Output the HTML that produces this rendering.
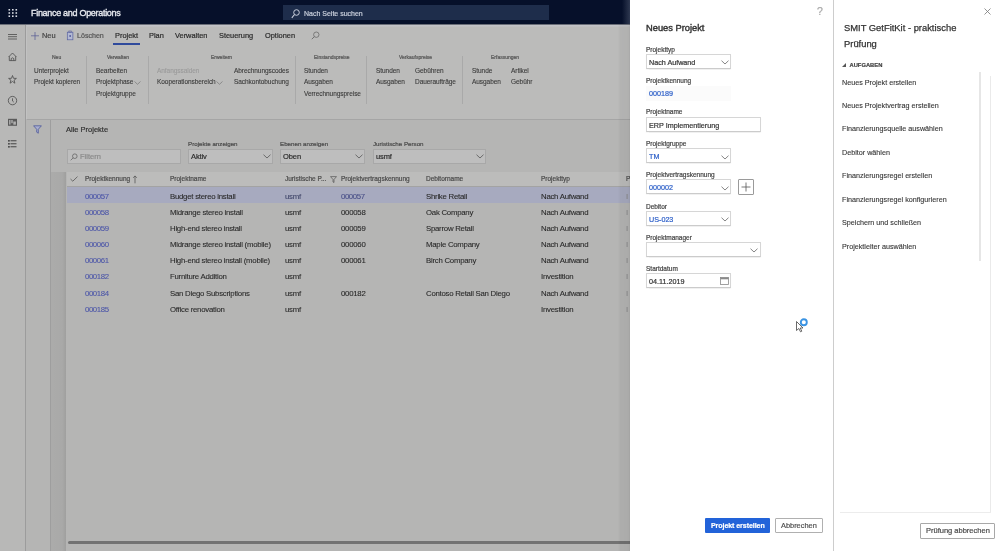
<!DOCTYPE html>
<html><head><meta charset="utf-8">
<style>
*{margin:0;padding:0;box-sizing:border-box}
html,body{width:1000px;height:551px;overflow:hidden;background:#b7b7b6;font-family:"Liberation Sans",sans-serif;color:#2e2e2e}
.a{position:absolute;white-space:nowrap}
#root div{-webkit-text-stroke-width:0.2px}
#root .rb{-webkit-text-stroke-width:0.1px;color:#3a3a3a}
#root .cell{-webkit-text-stroke-width:0.1px}
#root .ti{-webkit-text-stroke-width:0.1px}
#hdr{left:0;top:0;width:630px;height:24px;background:#06102a;border-bottom:0}
#rail{left:0;top:24px;width:26px;height:527px;background:#b8b8b7;border-right:1px solid #9c9c9c}
#nav{left:26px;top:24px;width:604px;height:96px;background:#bbbbba;border-bottom:1px solid #a5a5a5;border-left:1px solid #c2c2c2}
#page{left:26px;top:120px;width:604px;height:431px;background:#b5b5b4}
.t{font-size:7.5px;letter-spacing:-0.1px;line-height:10px}
.rb{font-size:6.5px;line-height:10px;color:#333;letter-spacing:-0.05px}
.gt{font-size:5px;line-height:8px;color:#555}
.dv{position:absolute;width:1px;background:#a9a9a9;top:56px;height:48px}
.tab{font-size:7.4px;line-height:10px;color:#2b2b2b;top:31px}
.lbl{font-size:6.5px;line-height:8px;color:#4a4a4a}
.inp{position:absolute;border:1px solid #a8a8a8;background:#bebebe}
.row{position:absolute;left:67px;width:563px;height:16px}
.cell{position:absolute;top:3px;font-size:7.8px;line-height:10px;letter-spacing:-0.25px;color:#2a2a2a;white-space:nowrap}
.lnk{color:#4d57a8;letter-spacing:-0.4px}
#panel{left:630px;top:0;width:203px;height:551px;background:#fff}
#task{left:833px;top:0;width:167px;height:551px;background:#fff;border-left:1px solid #cdcdcd}
.pl{font-size:6.5px;line-height:8px;color:#444}
.fld{position:absolute;border:1px solid #d6d6d6;border-bottom-color:#cbcbcb;background:#fff;height:15px;box-shadow:0 0.5px 1px rgba(0,0,0,0.06)}
.fv{position:absolute;left:2px;top:3px;font-size:7.2px;line-height:10px;color:#333;white-space:nowrap}
.blue{color:#2f61c9}
.ti{font-size:7.2px;line-height:10px;color:#333;left:842px}
</style></head><body>
<div id="root" style="position:absolute;left:0;top:0;width:1000px;height:551px;overflow:hidden;will-change:transform">
<div class="a" id="hdr"></div>
<!-- waffle -->
<svg class="a" style="left:8px;top:9px" width="10" height="8" viewBox="0 0 10 8">
<g fill="#d8dbe3"><rect x="0.5" y="0" width="1.6" height="1.6"/><rect x="4" y="0" width="1.6" height="1.6"/><rect x="7.5" y="0" width="1.6" height="1.6"/>
<rect x="0.5" y="3.2" width="1.6" height="1.6"/><rect x="4" y="3.2" width="1.6" height="1.6"/><rect x="7.5" y="3.2" width="1.6" height="1.6"/>
<rect x="0.5" y="6.4" width="1.6" height="1.6"/><rect x="4" y="6.4" width="1.6" height="1.6"/><rect x="7.5" y="6.4" width="1.6" height="1.6"/></g></svg>
<div class="a" style="left:31px;top:7px;font-size:9px;line-height:12px;color:#e6e8ee;letter-spacing:-0.3px;-webkit-text-stroke:0.35px #e6e8ee">Finance and Operations</div>
<div class="a" style="left:283px;top:4.5px;width:266px;height:15.5px;background:#1e2d4b"></div>
<svg class="a" style="left:291px;top:8.5px" width="9" height="10" viewBox="0 0 9 10"><circle cx="5.5" cy="3.5" r="2.8" fill="none" stroke="#c9cfdc" stroke-width="1"/><line x1="3.5" y1="5.5" x2="0.8" y2="8.8" stroke="#c9cfdc" stroke-width="1.1"/></svg>
<div class="a" style="left:304px;top:9px;font-size:7px;line-height:10px;color:#c9cfdc">Nach Seite suchen</div>

<div class="a" id="rail"></div>
<div class="a" id="nav"></div>
<div class="a" id="page"></div>
<div class="a" style="left:0;top:24px;width:630px;height:1px;background:#6a6e78"></div>
<div class="a" style="left:26px;top:25px;width:604px;height:2px;background:linear-gradient(#c4c5ca,#bdbdbd)"></div>
<div class="a" style="left:622px;top:0;width:8px;height:24px;background:linear-gradient(to right,rgba(120,130,150,0),rgba(120,130,150,0.35))"></div>

<!-- rail icons -->
<svg class="a" style="left:0;top:24px" width="25" height="130" viewBox="0 0 25 130">
<g stroke="#4a4a4a" fill="none" stroke-width="0.8">
<line x1="8" y1="10.5" x2="17" y2="10.5"/><line x1="8" y1="12.7" x2="17" y2="12.7"/><line x1="8" y1="15" x2="17" y2="15"/>
<path d="M8.6 33 L12.5 29 L16.4 33 M9.3 32.4 V36.6 H15.7 V32.4"/><path d="M11.2 36.6 V34.6 Q12.5 33 13.8 34.6 V36.6"/>
<path d="M12.5 51.5 L13.5 54.3 L16.4 54.4 L14.1 56.2 L14.9 59.2 L12.5 57.5 L10.1 59.2 L10.9 56.2 L8.6 54.4 L11.5 54.3 Z"/>
<circle cx="12.5" cy="76.6" r="4.2"/><path d="M12.5 74.3 V77 L13.8 78.1"/>
</g>
<g fill="#5a5a5a"><rect x="8" y="94.8" width="9" height="7"/></g>
<g fill="#b0b0b0"><rect x="9.1" y="96" width="1.4" height="4.6"/><rect x="11.3" y="96" width="1.4" height="3.2"/><rect x="13.3" y="97.5" width="2.6" height="3.2"/></g>
<g fill="#4f4f4f"><rect x="8" y="116" width="1.8" height="1.6"/><rect x="8" y="119" width="1.8" height="1.6"/><rect x="8" y="122" width="1.8" height="1.6"/>
<rect x="10.5" y="116.2" width="6" height="1.1"/><rect x="10.5" y="119.2" width="6" height="1.1"/><rect x="10.5" y="122.2" width="6" height="1.1"/></g>
</svg>
<!-- nav tabs -->
<svg class="a" style="left:30px;top:31px" width="10" height="10" viewBox="0 0 10 10"><g stroke="#5a5f95" stroke-width="0.75"><line x1="5" y1="1" x2="5" y2="9"/><line x1="1" y1="4.8" x2="9" y2="4.8"/></g></svg>
<div class="a tab" style="left:42px;color:#444">Neu</div>
<svg class="a" style="left:66px;top:30px" width="8" height="11" viewBox="0 0 8 11"><rect x="1.3" y="2.2" width="5.6" height="7.6" fill="#b3b9d3" stroke="#5a63a0" stroke-width="0.7"/><rect x="2.8" y="1" width="2.6" height="1.2" fill="none" stroke="#5a63a0" stroke-width="0.6"/><rect x="3.4" y="5" width="1.5" height="2" fill="#5a63a0"/></svg>
<div class="a tab" style="left:77px;color:#555;font-size:7.1px">Löschen</div>
<div class="a tab" style="left:115px">Projekt</div>
<div class="a" style="left:113px;top:43px;width:27px;height:2px;background:#2f4a9c"></div>
<div class="a tab" style="left:149px">Plan</div>
<div class="a tab" style="left:175px">Verwalten</div>
<div class="a tab" style="left:219px">Steuerung</div>
<div class="a tab" style="left:265px">Optionen</div>
<svg class="a" style="left:311px;top:31px" width="9" height="9" viewBox="0 0 9 9"><circle cx="5.3" cy="3.7" r="2.7" fill="none" stroke="#6a6a6a" stroke-width="0.8"/><line x1="3.4" y1="5.6" x2="0.8" y2="8.2" stroke="#6a6a6a" stroke-width="0.9"/></svg>

<!-- ribbon -->
<div class="a gt" style="left:52px;top:53px">Neu</div>
<div class="a rb" style="left:34px;top:66px">Unterprojekt</div>
<div class="a rb" style="left:34px;top:77px">Projekt kopieren</div>
<div class="dv" style="left:86px"></div>
<div class="a gt" style="left:107px;top:53px">Verwalten</div>
<div class="a rb" style="left:96px;top:66px">Bearbeiten</div>
<div class="a rb" style="left:96px;top:77px">Projektphase</div>
<svg class="a" style="left:134px;top:81px" width="7" height="4" viewBox="0 0 7 4"><path d="M0.5 0.5 L3.5 3.3 L6.5 0.5" fill="none" stroke="#777" stroke-width="0.7"/></svg>
<div class="a rb" style="left:96px;top:89px">Projektgruppe</div>
<div class="dv" style="left:148px"></div>
<div class="a gt" style="left:211px;top:53px">Erweitern</div>
<div class="a rb" style="left:157px;top:66px;color:#9a9a9a">Anfangssalden</div>
<div class="a rb" style="left:157px;top:77px">Kooperationsbereich</div>
<svg class="a" style="left:216px;top:81px" width="7" height="4" viewBox="0 0 7 4"><path d="M0.5 0.5 L3.5 3.3 L6.5 0.5" fill="none" stroke="#777" stroke-width="0.7"/></svg>
<div class="a rb" style="left:234px;top:66px">Abrechnungscodes</div>
<div class="a rb" style="left:234px;top:77px">Sachkontobuchung</div>
<div class="dv" style="left:295px"></div>
<div class="a gt" style="left:314px;top:53px">Einstandspreise</div>
<div class="a rb" style="left:304px;top:66px">Stunden</div>
<div class="a rb" style="left:304px;top:77px">Ausgaben</div>
<div class="a rb" style="left:304px;top:89px">Verrechnungspreise</div>
<div class="dv" style="left:366px"></div>
<div class="a gt" style="left:399px;top:53px">Verkaufspreise</div>
<div class="a rb" style="left:376px;top:66px">Stunden</div>
<div class="a rb" style="left:376px;top:77px">Ausgaben</div>
<div class="a rb" style="left:415px;top:66px">Gebühren</div>
<div class="a rb" style="left:415px;top:77px">Daueraufträge</div>
<div class="dv" style="left:462px"></div>
<div class="a gt" style="left:491px;top:53px">Erfassungen</div>
<div class="a rb" style="left:472px;top:66px">Stunde</div>
<div class="a rb" style="left:472px;top:77px">Ausgaben</div>
<div class="a rb" style="left:511px;top:66px">Artikel</div>
<div class="a rb" style="left:511px;top:77px">Gebühr</div>

<!-- filter column -->
<div class="a" style="left:50px;top:120px;width:1px;height:431px;background:#9e9e9e"></div>
<svg class="a" style="left:33px;top:125px" width="9" height="9" viewBox="0 0 9 9"><path d="M0.6 0.8 H8.4 L5.3 4.3 V8.2 L3.7 7.2 V4.3 Z" fill="#a9aed0" stroke="#4f5a9a" stroke-width="0.8"/></svg>
<div class="a" style="left:66px;top:125px;font-size:7.5px;line-height:10px;color:#333">Alle Projekte</div>

<!-- filters -->
<div class="inp" style="left:67px;top:149px;width:114px;height:15px"></div>
<svg class="a" style="left:70px;top:153px" width="8" height="8" viewBox="0 0 8 8"><circle cx="4.8" cy="3.2" r="2.3" fill="none" stroke="#666" stroke-width="0.8"/><line x1="3.2" y1="4.8" x2="0.7" y2="7.3" stroke="#666" stroke-width="0.8"/></svg>
<div class="a" style="left:80px;top:152px;font-size:7.5px;line-height:10px;color:#8a8a8a">Filtern</div>

<div class="a lbl" style="left:188px;top:140px;font-size:6.2px">Projekte anzeigen</div>
<div class="inp" style="left:188px;top:149px;width:85px;height:15px"></div>
<div class="a t" style="left:191px;top:152px">Aktiv</div>
<svg class="a" style="left:263px;top:154px" width="8" height="5" viewBox="0 0 8 5"><path d="M0.5 0.7 L4 4 L7.5 0.7" fill="none" stroke="#555" stroke-width="0.8"/></svg>

<div class="a lbl" style="left:280px;top:140px;font-size:6.2px">Ebenen anzeigen</div>
<div class="inp" style="left:280px;top:149px;width:85px;height:15px"></div>
<div class="a t" style="left:283px;top:152px">Oben</div>
<svg class="a" style="left:355px;top:154px" width="8" height="5" viewBox="0 0 8 5"><path d="M0.5 0.7 L4 4 L7.5 0.7" fill="none" stroke="#555" stroke-width="0.8"/></svg>

<div class="a lbl" style="left:373px;top:140px;font-size:6.2px">Juristische Person</div>
<div class="inp" style="left:373px;top:149px;width:113px;height:15px"></div>
<div class="a t" style="left:376px;top:152px">usmf</div>
<svg class="a" style="left:476px;top:154px" width="8" height="5" viewBox="0 0 8 5"><path d="M0.5 0.7 L4 4 L7.5 0.7" fill="none" stroke="#555" stroke-width="0.8"/></svg>

<!-- grid header -->
<div class="a" style="left:67px;top:172px;width:563px;height:15px;background:#bcbcbb;border-bottom:1px solid #a3a3a3"></div>
<svg class="a" style="left:70px;top:176px" width="8" height="6" viewBox="0 0 8 6"><path d="M0.5 3 L2.8 5.2 L7.5 0.6" fill="none" stroke="#555" stroke-width="0.8"/></svg>
<div class="a lbl" style="left:85px;top:175px">Projektkennung</div>
<svg class="a" style="left:132px;top:175px" width="6" height="9" viewBox="0 0 6 9"><path d="M3 1 V8.3 M1.2 2.8 L3 0.9 L4.8 2.8" fill="none" stroke="#555" stroke-width="0.8"/></svg>
<div class="a lbl" style="left:170px;top:175px">Projektname</div>
<div class="a lbl" style="left:285px;top:175px">Juristische P...</div>
<svg class="a" style="left:330px;top:176px" width="7" height="7" viewBox="0 0 7 7"><path d="M0.5 0.6 H6.5 L4 3.5 V6.5 L3 6 V3.5 Z" fill="none" stroke="#555" stroke-width="0.7"/></svg>
<div class="a lbl" style="left:341px;top:175px">Projektvertragskennung</div>
<div class="a lbl" style="left:426px;top:175px">Debitorname</div>
<div class="a lbl" style="left:541px;top:175px">Projekttyp</div>
<div class="a lbl" style="left:626px;top:175px">P</div>

<!-- rows -->
<div class="row" style="top:187px;background:#a7aabf"></div>
<div class="cell lnk" style="left:85px;top:192px">000057</div><div class="cell" style="left:170px;top:192px">Budget stereo install</div><div class="cell" style="left:285px;top:192px;color:#40466a">usmf</div><div class="cell lnk" style="left:341px;top:192px;color:#4a5088">000057</div><div class="cell" style="left:426px;top:192px">Shrike Retail</div><div class="cell" style="left:541px;top:192px">Nach Aufwand</div><div class="cell" style="left:626px;top:192px;color:#8a8a8a">I</div>
<div class="cell lnk" style="left:85px;top:208px">000058</div><div class="cell" style="left:170px;top:208px">Midrange stereo install</div><div class="cell" style="left:285px;top:208px">usmf</div><div class="cell" style="left:341px;top:208px">000058</div><div class="cell" style="left:426px;top:208px">Oak Company</div><div class="cell" style="left:541px;top:208px">Nach Aufwand</div><div class="cell" style="left:626px;top:208px;color:#8a8a8a">I</div>
<div class="cell lnk" style="left:85px;top:224px">000059</div><div class="cell" style="left:170px;top:224px">High-end stereo install</div><div class="cell" style="left:285px;top:224px">usmf</div><div class="cell" style="left:341px;top:224px">000059</div><div class="cell" style="left:426px;top:224px">Sparrow Retail</div><div class="cell" style="left:541px;top:224px">Nach Aufwand</div><div class="cell" style="left:626px;top:224px;color:#8a8a8a">I</div>
<div class="cell lnk" style="left:85px;top:240px">000060</div><div class="cell" style="left:170px;top:240px">Midrange stereo install (mobile)</div><div class="cell" style="left:285px;top:240px">usmf</div><div class="cell" style="left:341px;top:240px">000060</div><div class="cell" style="left:426px;top:240px">Maple Company</div><div class="cell" style="left:541px;top:240px">Nach Aufwand</div><div class="cell" style="left:626px;top:240px;color:#8a8a8a">I</div>
<div class="cell lnk" style="left:85px;top:256px">000061</div><div class="cell" style="left:170px;top:256px">High-end stereo install (mobile)</div><div class="cell" style="left:285px;top:256px">usmf</div><div class="cell" style="left:341px;top:256px">000061</div><div class="cell" style="left:426px;top:256px">Birch Company</div><div class="cell" style="left:541px;top:256px">Nach Aufwand</div><div class="cell" style="left:626px;top:256px;color:#8a8a8a">I</div>
<div class="cell lnk" style="left:85px;top:272px">000182</div><div class="cell" style="left:170px;top:272px">Furniture Addition</div><div class="cell" style="left:285px;top:272px">usmf</div><div class="cell" style="left:541px;top:272px">Investition</div><div class="cell" style="left:626px;top:272px;color:#8a8a8a">I</div>
<div class="cell lnk" style="left:85px;top:289px">000184</div><div class="cell" style="left:170px;top:289px">San Diego Subscriptions</div><div class="cell" style="left:285px;top:289px">usmf</div><div class="cell" style="left:341px;top:289px">000182</div><div class="cell" style="left:426px;top:289px">Contoso Retail San Diego</div><div class="cell" style="left:541px;top:289px">Nach Aufwand</div><div class="cell" style="left:626px;top:289px;color:#8a8a8a">I</div>
<div class="cell lnk" style="left:85px;top:305px">000185</div><div class="cell" style="left:170px;top:305px">Office renovation</div><div class="cell" style="left:285px;top:305px">usmf</div><div class="cell" style="left:541px;top:305px">Investition</div><div class="cell" style="left:626px;top:305px;color:#8a8a8a">I</div>

<!-- bottom scrollbar -->
<div class="a" style="left:68px;top:540.5px;width:570px;height:3px;border-radius:1.5px;background:#727272"></div>
<div class="a" style="left:51px;top:172px;width:15px;height:379px;background:linear-gradient(to right,rgba(0,0,0,0.055),rgba(0,0,0,0.065) 75%,rgba(0,0,0,0.12))"></div>
<div class="a" style="left:618px;top:24px;width:12px;height:527px;background:linear-gradient(to right,rgba(0,0,0,0),rgba(0,0,0,0.04) 20%,rgba(0,0,0,0.05) 85%,rgba(0,0,0,0.1))"></div>

<!-- panel -->
<div class="a" id="panel"></div>
<div class="a" style="left:817px;top:5px;font-size:10.5px;line-height:12px;color:#a8a8a8">?</div>
<div class="a" style="left:646px;top:22px;font-size:9.3px;line-height:12px;color:#333;-webkit-text-stroke:0.4px #333">Neues Projekt</div>

<div class="a pl" style="left:646px;top:46px">Projekttyp</div>
<div class="fld" style="left:646px;top:54px;width:85px"><div class="fv">Nach Aufwand</div></div>
<svg class="a" style="left:721px;top:60px" width="8" height="5" viewBox="0 0 8 5"><path d="M0.5 0.7 L4 4 L7.5 0.7" fill="none" stroke="#666" stroke-width="0.8"/></svg>

<div class="a pl" style="left:646px;top:77px">Projektkennung</div>
<div class="a" style="left:646px;top:86px;width:85px;height:15px;background:#fbfbfb"></div>
<div class="a blue" style="left:649px;top:89px;font-size:7.2px;line-height:10px">000189</div>

<div class="a pl" style="left:646px;top:108px">Projektname</div>
<div class="fld" style="left:646px;top:117px;width:115px"><div class="fv">ERP Implementierung</div></div>

<div class="a pl" style="left:646px;top:140px">Projektgruppe</div>
<div class="fld" style="left:646px;top:148px;width:85px"><div class="fv blue">TM</div></div>
<svg class="a" style="left:721px;top:155px" width="8" height="5" viewBox="0 0 8 5"><path d="M0.5 0.7 L4 4 L7.5 0.7" fill="none" stroke="#666" stroke-width="0.8"/></svg>

<div class="a pl" style="left:646px;top:171px">Projektvertragskennung</div>
<div class="fld" style="left:646px;top:179px;width:85px"><div class="fv blue">000002</div></div>
<svg class="a" style="left:721px;top:186px" width="8" height="5" viewBox="0 0 8 5"><path d="M0.5 0.7 L4 4 L7.5 0.7" fill="none" stroke="#666" stroke-width="0.8"/></svg>
<div class="a" style="left:738px;top:179px;width:16px;height:16px;border:1px solid #9a9a9a;border-radius:1px;background:#fff"></div>
<svg class="a" style="left:741px;top:182px" width="10" height="10" viewBox="0 0 10 10"><g stroke="#555" stroke-width="0.8"><line x1="5" y1="0.5" x2="5" y2="9.5"/><line x1="0.5" y1="5" x2="9.5" y2="5"/></g></svg>

<div class="a pl" style="left:646px;top:203px">Debitor</div>
<div class="fld" style="left:646px;top:211px;width:85px"><div class="fv blue">US-023</div></div>
<svg class="a" style="left:721px;top:217px" width="8" height="5" viewBox="0 0 8 5"><path d="M0.5 0.7 L4 4 L7.5 0.7" fill="none" stroke="#666" stroke-width="0.8"/></svg>

<div class="a pl" style="left:646px;top:234px">Projektmanager</div>
<div class="fld" style="left:646px;top:242px;width:115px"></div>
<svg class="a" style="left:750px;top:248px" width="8" height="5" viewBox="0 0 8 5"><path d="M0.5 0.7 L4 4 L7.5 0.7" fill="none" stroke="#666" stroke-width="0.8"/></svg>

<div class="a pl" style="left:646px;top:265px">Startdatum</div>
<div class="fld" style="left:646px;top:273px;width:85px"><div class="fv">04.11.2019</div></div>
<svg class="a" style="left:720px;top:276.5px" width="9" height="8" viewBox="0 0 9 8"><rect x="0.5" y="0.5" width="8" height="7" fill="none" stroke="#8a8a8a" stroke-width="0.8"/><rect x="0.5" y="0.5" width="8" height="1.8" fill="#8a8a8a"/></svg>

<!-- cursor -->
<svg class="a" style="left:795px;top:318px" width="14" height="15" viewBox="0 0 14 15"><path d="M1.5 3.5 V12.5 L3.8 10.5 L5.5 13.8 L6.8 13.2 L5.2 10 H8 Z" fill="#fff" stroke="#444" stroke-width="0.8"/><circle cx="8.8" cy="4.2" r="3" fill="none" stroke="#3a93e2" stroke-width="1.9"/></svg>

<div class="a" style="left:705px;top:518px;width:65px;height:15px;background:#2263d9;border-radius:1px"></div>
<div class="a" style="left:711px;top:521px;font-size:7px;line-height:10px;font-weight:bold;color:#fff;letter-spacing:-0.05px">Projekt erstellen</div>
<div class="a" style="left:775px;top:517.5px;width:48px;height:15.5px;border:1px solid #b0b0b0;border-radius:1px;background:#fff"></div>
<div class="a" style="left:781px;top:521px;font-size:7.4px;line-height:10px;color:#505050">Abbrechen</div>

<!-- task pane -->
<div class="a" id="task"></div>
<svg class="a" style="left:984px;top:8px" width="7" height="7" viewBox="0 0 7 7"><g stroke="#777" stroke-width="0.8"><line x1="0.5" y1="0.5" x2="6.5" y2="6.5"/><line x1="6.5" y1="0.5" x2="0.5" y2="6.5"/></g></svg>
<div class="a" style="left:844px;top:19.5px;font-size:9.4px;line-height:16px;color:#333;white-space:normal;width:140px;-webkit-text-stroke:0.25px #333">SMIT GetFitKit - praktische Prüfung</div>
<svg class="a" style="left:841.5px;top:63px" width="4" height="4" viewBox="0 0 4 4"><path d="M0 4 L4 0 V4 Z" fill="#555"/></svg>
<div class="a" style="left:849.5px;top:61px;font-size:5.8px;line-height:8px;font-weight:bold;color:#444">AUFGABEN</div>
<div class="a" style="left:978.5px;top:72px;width:2px;height:189px;background:#e6e6e6"></div>
<div class="a" style="left:990px;top:76px;width:1px;height:436px;background:#eaeaea"></div>
<div class="a" style="left:840px;top:512px;width:151px;height:1px;background:#ececec"></div>
<div class="a ti" style="top:78px">Neues Projekt erstellen</div>
<div class="a ti" style="top:101px">Neues Projektvertrag erstellen</div>
<div class="a ti" style="top:124px">Finanzierungsquelle auswählen</div>
<div class="a ti" style="top:148px">Debitor wählen</div>
<div class="a ti" style="top:171px">Finanzierungsregel erstellen</div>
<div class="a ti" style="top:195px">Finanzierungsregel konfigurieren</div>
<div class="a ti" style="top:218px">Speichern und schließen</div>
<div class="a ti" style="top:242px">Projektleiter auswählen</div>
<div class="a" style="left:920px;top:523px;width:75px;height:16px;border:1px solid #a8a8a8;border-radius:1px;background:#fff"></div>
<div class="a" style="left:926px;top:526px;font-size:7.5px;line-height:10px;color:#4a4a4a">Prüfung abbrechen</div>
</div>
</body></html>
